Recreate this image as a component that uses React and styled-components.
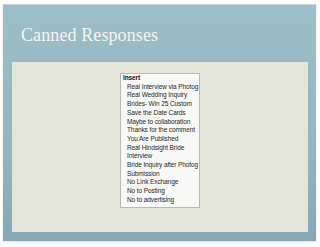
import styled, { createGlobalStyle } from "styled-components";

const GlobalStyle = createGlobalStyle`
  body {
    margin: 0;
    background: #ffffff;
  }
`;

const Page = styled.div`
  width: 320px;
  height: 247px;
  padding: 4px 4px 0 3px;
  box-sizing: border-box;
`;

const Slide = styled.div`
  width: 313px;
  height: 237px;
  box-sizing: border-box;
  border-top: 1px solid #c9d3d6;
  background: linear-gradient(180deg, #9dbdc8 0%, #94b5c1 60%, #86a7b3 100%);
  display: flex;
  flex-direction: column;
  padding: 0 8px 9px 9px;
  box-shadow: 0 1px 2px rgba(0, 0, 0, 0.15);
`;

const Title = styled.h1`
  flex-shrink: 0;
  margin: 0;
  height: 57px;
  padding: 20px 0 0 9px;
  box-sizing: border-box;
  font-family: "Liberation Serif", "DejaVu Serif", serif;
  font-weight: normal;
  font-size: 18px;
  line-height: 20px;
  color: #f4f6f1;
  letter-spacing: 0.1px;
`;

const Panel = styled.div`
  flex: 1;
  min-height: 0;
  background: #e3e5d8;
  display: flex;
  justify-content: flex-start;
  align-items: flex-start;
  padding: 11px 0 0 108px;
`;

const Menu = styled.ul`
  margin: 0;
  width: 80px;
  box-sizing: border-box;
  list-style: none;
  background: #f8f8f6;
  border: 1px solid #b7b9b4;
  padding: 0 0 2px 0;
  font-family: "Liberation Sans", Arial, sans-serif;
  font-size: 6.5px;
  letter-spacing: -0.1px;
  line-height: 8.7px;
  color: #262626;
  white-space: nowrap;
`;

const MenuItem = styled.li`
  padding-left: ${(props) => (props.$header ? "2px" : "6px")};
  font-weight: ${(props) => (props.$header ? "bold" : "normal")};
  color: ${(props) => (props.$header ? "#111" : "#262626")};
`;

const items = [
  "Real Interview via Photog",
  "Real Wedding Inquiry",
  ["Brides- Win 25 Custom", "Save the Date Cards"],
  "Maybe to collaboration",
  "Thanks for the comment",
  "You Are Published",
  ["Real Hindsight Bride", "Interview"],
  ["Bride Inquiry after Photog", "Submission"],
  "No Link Exchange",
  "No to Posting",
  "No to advertising",
];

const App = () => {
  return (
    <>
      <GlobalStyle />
      <Page>
        <Slide>
          <Title>Canned Responses</Title>
          <Panel>
            <Menu>
              <MenuItem $header>Insert</MenuItem>
              {items.map((item, index) => (
                <MenuItem key={index}>
                  {Array.isArray(item) ? (
                    <>
                      {item[0]}
                      <br />
                      {item[1]}
                    </>
                  ) : (
                    item
                  )}
                </MenuItem>
              ))}
            </Menu>
          </Panel>
        </Slide>
      </Page>
    </>
  );
};

export default App;
